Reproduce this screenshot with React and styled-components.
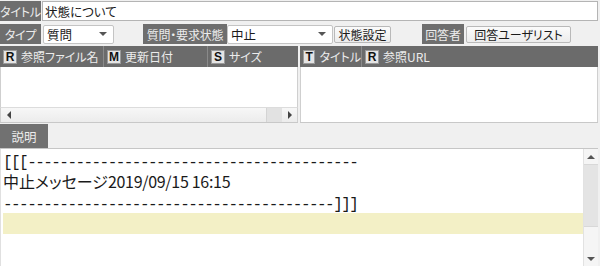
import React from "react";
import styled, { createGlobalStyle } from "styled-components";

const Global = createGlobalStyle`
  html, body { margin: 0; padding: 0; background: #f0f0f0; }
  body { font-family: "Noto Sans CJK JP", "Noto Sans", sans-serif; font-size: 12px; color: #1a1a1a; }
  * { box-sizing: border-box; }
`;

const Page = styled.div`
  width: 600px;
  height: 266px;
  display: flex;
  flex-direction: column;
  overflow: hidden;
  background: #f0f0f0;
`;

const Row = styled.div`
  display: flex;
  align-items: center;
  height: ${(p) => p.$h}px;
  margin-top: ${(p) => p.$mt || 0}px;
  padding-right: 2px;
`;

const Label = styled.div`
  background: #6e6e6e;
  color: #ececec;
  height: 20px;
  width: ${(p) => p.$w}px;
  flex: none;
  display: flex;
  align-items: center;
  justify-content: center;
  font-size: 12px;
  font-feature-settings: "palt";
  letter-spacing: -0.2px;
  margin-left: ${(p) => p.$ml || 0}px;
  white-space: nowrap;
`;

const TextInput = styled.div`
  flex: 1;
  height: 20px;
  margin-left: 1px;
  background: #fff;
  border: 1px solid #b4b4b4;
  display: flex;
  align-items: center;
  padding-left: 2px;
  font-feature-settings: "palt";
  font-size: 12.5px;
`;

const Select = styled.div`
  width: ${(p) => p.$w}px;
  flex: none;
  height: 19px;
  margin-left: ${(p) => p.$ml || 0}px;
  background: #fff;
  border: 1px solid #c4c4c4;
  border-radius: 2px;
  display: flex;
  align-items: center;
  justify-content: space-between;
  padding: 0 6px 0 3px;
  font-size: 12.5px;
`;

const Caret = styled.span`
  width: 0;
  height: 0;
  border-left: 4px solid transparent;
  border-right: 4px solid transparent;
  border-top: 4px solid #555;
`;

const Button = styled.div`
  width: ${(p) => p.$w}px;
  flex: none;
  height: 17px;
  margin-left: ${(p) => p.$ml || 0}px;
  background: linear-gradient(#fbfbfb, #ececec);
  border: 1px solid #b9b9b9;
  border-radius: 2px;
  display: flex;
  align-items: center;
  justify-content: center;
  font-size: 12px;
  font-feature-settings: "palt";
  white-space: nowrap;
`;

const Panels = styled.div`
  display: flex;
  gap: 2px;
  margin-top: 2px;
  height: 77px;
  padding-right: 2px;
`;

const Panel = styled.div`
  flex: 1;
  display: flex;
  flex-direction: column;
  border-bottom: 1px solid #c8c8c8;
`;

const HeaderBar = styled.div`
  height: 21px;
  background: #6b6b6b;
  display: flex;
  align-items: center;
`;

const HeaderCell = styled.div`
  display: flex;
  align-items: center;
  gap: 4px;
  height: 100%;
  padding-left: 3px;
  width: ${(p) => (p.$w ? p.$w + "px" : "auto")};
  flex: ${(p) => (p.$w ? "none" : "1")};
  border-right: ${(p) => (p.$sep ? "1px solid #8a8a8a" : "none")};
  color: #ececec;
  font-size: 12px;
  font-feature-settings: "palt";
  white-space: nowrap;
`;

const KeyBox = styled.span`
  width: 14px;
  height: 14px;
  background: #e4e4e4;
  border: 1px solid #9a9a9a;
  color: #111;
  font-family: "Liberation Sans", Arial, sans-serif;
  font-weight: bold;
  font-size: 12px;
  display: flex;
  align-items: center;
  justify-content: center;
  line-height: 1;
`;

const ListBody = styled.div`
  flex: 1;
  background: #fff;
  border-left: 1px solid #cfcfcf;
  border-right: 1px solid #cfcfcf;
`;

const HScroll = styled.div`
  height: 15px;
  display: flex;
  align-items: center;
  background: linear-gradient(#f7f7f7, #ececec);
  border-top: 1px solid #dcdcdc;
  border-left: 1px solid #cfcfcf;
  border-right: 1px solid #cfcfcf;
`;

const ArrowBtn = styled.div`
  width: 15px;
  height: 100%;
  flex: none;
  display: flex;
  align-items: center;
  justify-content: center;
`;

const Tri = styled.span`
  width: 0;
  height: 0;
  ${(p) =>
    p.$dir === "left"
      ? "border-top:4px solid transparent;border-bottom:4px solid transparent;border-right:4px solid #444;"
      : p.$dir === "right"
      ? "border-top:4px solid transparent;border-bottom:4px solid transparent;border-left:4px solid #444;"
      : p.$dir === "up"
      ? "border-left:4px solid transparent;border-right:4px solid transparent;border-bottom:4px solid #555;"
      : "border-left:4px solid transparent;border-right:4px solid transparent;border-top:4px solid #555;"}
`;

const Track = styled.div`
  flex: 1;
  height: 100%;
  display: flex;
  justify-content: flex-end;
`;

const HThumb = styled.div`
  width: 16px;
  height: 100%;
  background: #e2e2e2;
  border-left: 1px solid #d4d4d4;
`;

const TabBand = styled.div`
  height: 26px;
  display: flex;
  align-items: flex-end;
  border-bottom: 1px solid #c6c6c6;
  margin-right: 2px;
`;

const Tab = styled.div`
  width: 48px;
  height: 24px;
  background: #717171;
  color: #ececec;
  font-size: 12.5px;
  display: flex;
  align-items: center;
  justify-content: center;
`;

const Editor = styled.div`
  flex: 1;
  display: flex;
  background: #fff;
  margin-right: 2px;
  border-left: 1px solid #e0e0e0;
`;

const EditorText = styled.div`
  flex: 1;
  padding: 1px 0 0 2px;
  font-size: 16px;
  line-height: 21px;
  color: #1a1a1a;
`;

const Line = styled.div`
  height: 21px;
  line-height: 21px;
  white-space: nowrap;
  background: ${(p) => (p.$hl ? "#f3f0c6" : "transparent")};
`;

const Dashes = styled.span`
  font-family: "Liberation Mono", "DejaVu Sans Mono", monospace;
  font-size: 16px;
  letter-spacing: -1.55px;
`;

const JP = styled.span`
  font-feature-settings: "palt";
`;

const Digits = styled.span`
  letter-spacing: -0.3px;
`;

const VScroll = styled.div`
  width: 15px;
  flex: none;
  display: flex;
  flex-direction: column;
  background: #f5f5f5;
  border-left: 1px solid #e2e2e2;
`;

const VArrow = styled.div`
  height: 15px;
  display: flex;
  align-items: center;
  justify-content: center;
  flex: none;
`;

const VThumb = styled.div`
  height: 63px;
  background: #e4e4e4;
  border-top: 1px solid #d8d8d8;
  border-bottom: 1px solid #d8d8d8;
`;

const VTrack = styled.div`
  flex: 1;
`;

const dashes = "-".repeat(41);

export default function App() {
  return (
    <Page>
      <Global />
      <Row $h={20} $mt={1}>
        <Label $w={41}>タイトル</Label>
        <TextInput>状態について</TextInput>
      </Row>
      <Row $h={20} $mt={3}>
        <Label $w={41}>タイプ</Label>
        <Select $w={71} $ml={2}>
          <span>質問</span>
          <Caret />
        </Select>
        <Label $w={84} $ml={29}>質問・要求状態</Label>
        <Select $w={106} $ml={0}>
          <span>中止</span>
          <Caret />
        </Select>
        <Button $w={57} $ml={1}>状態設定</Button>
        <Label $w={42} $ml={31}>回答者</Label>
        <Button $w={105} $ml={2}>回答ユーザリスト</Button>
      </Row>
      <Panels>
        <Panel>
          <HeaderBar>
            <HeaderCell $w={104} $sep>
              <KeyBox>R</KeyBox>参照ファイル名
            </HeaderCell>
            <HeaderCell $w={104} $sep>
              <KeyBox>M</KeyBox>更新日付
            </HeaderCell>
            <HeaderCell>
              <KeyBox>S</KeyBox>サイズ
            </HeaderCell>
          </HeaderBar>
          <ListBody />
          <HScroll>
            <ArrowBtn>
              <Tri $dir="left" />
            </ArrowBtn>
            <Track>
              <HThumb />
            </Track>
            <ArrowBtn>
              <Tri $dir="right" />
            </ArrowBtn>
          </HScroll>
        </Panel>
        <Panel>
          <HeaderBar>
            <HeaderCell $w={62} $sep>
              <KeyBox>T</KeyBox>タイトル
            </HeaderCell>
            <HeaderCell>
              <KeyBox>R</KeyBox>参照URL
            </HeaderCell>
          </HeaderBar>
          <ListBody />
        </Panel>
      </Panels>
      <TabBand>
        <Tab>説明</Tab>
      </TabBand>
      <Editor>
        <EditorText>
          <Line>
            <Dashes>[[[{dashes}</Dashes>
          </Line>
          <Line>
            <JP>中止メッセージ</JP>
            <Digits>2019/09/15 16:15</Digits>
          </Line>
          <Line>
            <Dashes>{dashes}]]]</Dashes>
          </Line>
          <Line $hl />
        </EditorText>
        <VScroll>
          <VArrow>
            <Tri $dir="up" />
          </VArrow>
          <VThumb />
          <VTrack />
          <VArrow>
            <Tri $dir="down" />
          </VArrow>
        </VScroll>
      </Editor>
    </Page>
  );
}
